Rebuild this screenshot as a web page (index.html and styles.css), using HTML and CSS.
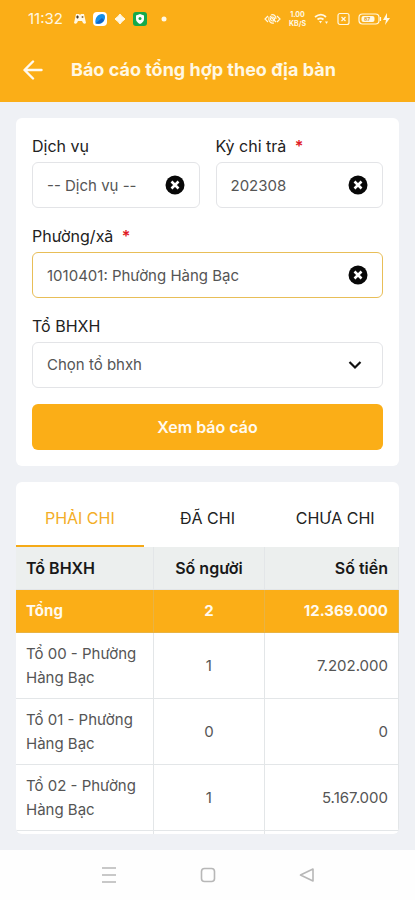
FILE: index.html
```html
<!DOCTYPE html>
<html lang="vi">
<head>
<meta charset="utf-8">
<meta name="viewport" content="width=device-width, initial-scale=1">
<title>Báo cáo tổng hợp theo địa bàn</title>
<link rel="stylesheet" href="styles.css">
</head>
<body>
<header class="header">
  <div class="status">
    <div class="status-side">
      <time class="clock">11:32</time>
      <svg width="14" height="14" viewBox="0 0 14 14" aria-hidden="true"><path d="M3 2h3l1 1 1-1h3l2 9c-1 1-2 1-3 0L9 9H5l-1 2c-1 1-2 1-3 0z" fill="#fff8e4"/><path d="M3 5h3M4.500 3.500v3" stroke="#4b3b23" stroke-width="1.200"/><circle cx="9.500" cy="5" r="1" fill="#95703b"/></svg>
      <svg width="14" height="14" viewBox="0 0 14 14" aria-hidden="true"><rect width="14" height="14" rx="4" fill="#fff"/><path d="M2.500 11.500C1.500 6 5 2 9 2q3 0 3 3c0 5-4 8-9.500 6.500z" fill="#168fe8"/><path d="M2.500 11.500L9 6l2 2c-2 3-4 4-8.500 3.500z" fill="#1262c4"/></svg>
      <svg width="14" height="14" viewBox="0 0 14 14" aria-hidden="true"><path d="M7 2l1.500 2 3.500 3-3.500 3L7 12l-1.500-2L2 7l3.500-3z" fill="#fff8e4" stroke="#fff8e4" stroke-linejoin="round"/></svg>
      <svg width="14" height="14" viewBox="0 0 14 14" aria-hidden="true"><rect width="14" height="14" rx="3" fill="#14a94b"/><path d="M7 2l4 1.500V7c0 2.500-2 4-4 5-2-1-4-2.500-4-5V3.500z" fill="#fff"/><circle cx="7" cy="6.500" r="1.500" fill="#14a94b"/></svg>
      <svg class="dot" width="14" height="14" viewBox="0 0 14 14" aria-hidden="true"><circle cx="7" cy="7" r="2.500" fill="#fff8e4"/></svg>
    </div>
    <div class="status-side status-right">
      <svg width="17" height="14" viewBox="0 0 17 14" aria-hidden="true"><path d="M4 4L1 7l3 3M13 4l3 3-3 3M7 3c3-1 5 1 5 4M5 5c-1 4 2 7 5 6M6 4l6 6" class="line"/><circle cx="8.500" cy="7" r="2" class="line"/></svg>
      <span class="speed"><span>1.00</span><span>KB/S</span></span>
      <svg width="15" height="14" viewBox="0 0 15 14" aria-hidden="true"><path d="M1 5c4-3 8-3 11 0M3.500 7.500c2-1.500 4-1.500 6 0" class="line wide"/><path d="M5 9h3l-1.500 2.500zM11 9.500h3L12.500 12z" fill="#fff8e4"/></svg>
      <svg width="13" height="14" viewBox="0 0 13 14" aria-hidden="true"><rect x="1" y="1.500" width="11" height="11" rx="2" class="line"/><path d="M4.500 5l4 4m0-4l-4 4" class="line"/></svg>
      <svg width="33" height="14" viewBox="0 0 33 14" aria-hidden="true"><rect x="1" y="2" width="20" height="10" rx="3.500" class="line"/><path d="M22.500 5v4" class="line"/><rect x="3.500" y="4" width="13" height="6" rx="2" fill="#fff8e4"/><text x="6" y="9" class="charge">87</text><path d="M29 1l-4 7h3l-1 5 5-7h-3z" fill="#fff8e4"/></svg>
    </div>
  </div>
  <div class="titlebar">
    <button class="back" type="button" aria-label="Quay lại"><svg width="20" height="20" viewBox="0 0 20 20"><path d="M18.500 10H2M10 1.500L1.500 10l8.500 8.500"/></svg></button>
    <h1>Báo cáo tổng hợp theo địa bàn</h1>
  </div>
</header>

<main class="main">
  <form class="card form">
    <div class="pair">
      <div class="group">
        <label for="service">Dịch vụ</label>
        <div class="field"><input id="service" type="text" value="-- Dịch vụ --"><button class="clear" type="button" aria-label="Xóa dịch vụ"><svg width="20" height="20" viewBox="0 0 20 20"><circle cx="10" cy="10" r="9.500"/><path d="M6.500 6.500l7 7m0-7l-7 7"/></svg></button></div>
      </div>
      <div class="group">
        <label for="period">Kỳ chi trả <span class="required">*</span></label>
        <div class="field"><input id="period" type="text" value="202308"><button class="clear" type="button" aria-label="Xóa kỳ chi trả"><svg width="20" height="20" viewBox="0 0 20 20"><circle cx="10" cy="10" r="9.500"/><path d="M6.500 6.500l7 7m0-7l-7 7"/></svg></button></div>
      </div>
    </div>
    <div class="group">
      <label for="ward">Phường/xã <span class="required">*</span></label>
      <div class="field active"><input id="ward" type="text" value="1010401: Phường Hàng Bạc"><button class="clear" type="button" aria-label="Xóa phường/xã"><svg width="20" height="20" viewBox="0 0 20 20"><circle cx="10" cy="10" r="9.500"/><path d="M6.500 6.500l7 7m0-7l-7 7"/></svg></button></div>
    </div>
    <div class="group">
      <label for="team">Tổ BHXH</label>
      <div class="field"><select id="team"><option>Chọn tổ bhxh</option></select><svg class="chevron" width="14" height="10" viewBox="0 0 14 10" aria-hidden="true"><path d="M1.500 2L7 7.500 12.500 2"/></svg></div>
    </div>
    <button class="submit" type="button">Xem báo cáo</button>
  </form>

  <section class="card report">
    <div class="tabs" role="tablist">
      <button class="tab selected" type="button" role="tab" aria-selected="true">PHẢI CHI</button>
      <button class="tab" type="button" role="tab" aria-selected="false">ĐÃ CHI</button>
      <button class="tab" type="button" role="tab" aria-selected="false">CHƯA CHI</button>
    </div>
    <table>
      <colgroup><col class="col-name"><col class="col-count"><col class="col-money"></colgroup>
      <thead><tr><th scope="col">Tổ BHXH</th><th scope="col">Số người</th><th scope="col">Số tiền</th></tr></thead>
      <tbody>
        <tr class="total"><td>Tổng</td><td>2</td><td>12.369.000</td></tr>
        <tr><td>Tổ 00 - Phường Hàng Bạc</td><td>1</td><td>7.202.000</td></tr>
        <tr><td>Tổ 01 - Phường Hàng Bạc</td><td>0</td><td>0</td></tr>
        <tr><td>Tổ 02 - Phường Hàng Bạc</td><td>1</td><td>5.167.000</td></tr>
      </tbody>
    </table>
    <div class="more"><span></span><span></span><span></span></div>
  </section>
</main>

<nav class="system-nav">
  <button type="button" aria-label="Ứng dụng gần đây"><svg width="16" height="18" viewBox="0 0 16 18"><path d="M1 2h14M1 9h14M1 16h14"/></svg></button>
  <button type="button" aria-label="Màn hình chính"><svg width="16" height="18" viewBox="0 0 16 18"><rect x="1.500" y="2.500" width="13" height="13" rx="3"/></svg></button>
  <button type="button" aria-label="Trở về"><svg width="16" height="18" viewBox="0 0 16 18"><path d="M14 3v12L1.500 9z"/></svg></button>
</nav>
</body>
</html>
```
FILE: styles.css
```css
* { box-sizing: border-box; }
body {
  margin: 0;
  min-height: 100vh;
  display: flex;
  flex-direction: column;
  background: #eff1f5;
  color: #222;
  font-family: Inter, "Noto Sans", sans-serif;
  font-size: 16px;
  line-height: 24px;
}
button, input, select { font: inherit; color: inherit; }
button { border: 0; padding: 0; background: none; cursor: pointer; }
svg { display: block; flex: none; }

.header { background: #fbae17; color: #fff8e4; }
.status {
  height: 38px;
  padding: 0 24px 0 28px;
  display: flex;
  align-items: center;
  justify-content: space-between;
}
.status-side { display: flex; align-items: center; gap: 6px; }
.status-right { gap: 8px; }
.clock { font-size: 15px; margin-right: 4px; }
.dot { margin-left: 4px; }
.line { fill: none; stroke: #fff8e4; stroke-width: 1.2; }
.wide { stroke-width: 1.8; }
.speed { display: grid; font-size: 7px; line-height: 9px; font-weight: 700; text-align: center; }
.charge { font-size: 5px; font-weight: 700; fill: #dc9a1d; }
.titlebar {
  height: 64px;
  padding: 0 23px;
  display: flex;
  align-items: center;
  gap: 28px;
}
.back svg { fill: none; stroke: #fffaf0; stroke-width: 2.4; stroke-linecap: round; stroke-linejoin: round; }
h1 { margin: 0; font-size: 18px; line-height: 24px; font-weight: 700; }

.main { flex: 1; padding: 16px; display: grid; align-content: start; gap: 16px; }
.card { background: #fff; border-radius: 6px; }
.form { padding: 16px; display: grid; gap: 16px; }
.pair { display: grid; grid-template-columns: 1fr 1fr; gap: 16px; }
.group { display: grid; gap: 4px; min-width: 0; }
.required { color: #e01b24; font-weight: 600; margin-left: 4px; }
.field {
  position: relative;
  height: 46px;
  display: flex;
  align-items: center;
  border: 1px solid #e3e4e7;
  border-radius: 6px;
  padding: 0 14px;
}
.field.active { border-color: #e8be58; }
.field input, .field select {
  flex: 1;
  min-width: 0;
  width: 100%;
  height: 100%;
  padding: 0;
  border: 0;
  outline: 0;
  background: none;
  color: #555;
  font-size: 15px;
  appearance: none;
}
.clear circle { fill: #080808; }
.clear path { stroke: #fff; stroke-width: 2.6; }
.chevron { pointer-events: none; margin-right: 6px; fill: none; stroke: #111; stroke-width: 2.2; }
.submit { height: 46px; border-radius: 6px; background: #fbae17; color: #fffaf0; font-weight: 600; }

.report { overflow: hidden; }
.tabs { display: grid; grid-template-columns: repeat(3, 1fr); }
.tab { height: 65px; padding-top: 8px; border-bottom: 2px solid transparent; }
.tab.selected { color: #f3ad27; border-bottom-color: #f5aa18; }
table { width: 100%; table-layout: fixed; border-collapse: separate; border-spacing: 0; }
.col-name { width: 36%; }
.col-count { width: 29%; }
.col-money { width: 35%; }
th, td { padding: 9px 10px 8px; border-right: 1px solid #e3e6e8; border-bottom: 1px solid #e3e6e8; text-align: left; }
td { color: #555; font-size: 15px; }
th { padding-bottom: 9px; background: #ecefee; color: #181818; font-weight: 600; }
th:nth-child(2), td:nth-child(2) { text-align: center; }
th:nth-child(3), td:nth-child(3) { text-align: right; }
.total td { padding-bottom: 9px; background: #fbae17; border-color: #e9b342; color: #fffaf0; font-weight: 700; }
.more { display: grid; grid-template-columns: 36fr 29fr 35fr; height: 3px; }
.more span { border-right: 1px solid #e3e6e8; }

.system-nav { height: 50px; background: #fefefe; display: flex; align-items: center; justify-content: center; gap: 83px; }
.system-nav svg { fill: none; stroke: #b7b7b7; stroke-width: 1.6; stroke-linejoin: round; }
```
